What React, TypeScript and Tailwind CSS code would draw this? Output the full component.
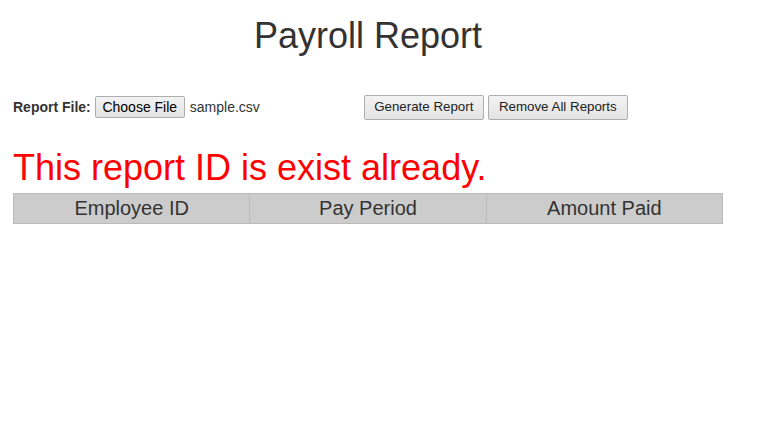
const columns = ["Employee ID", "Pay Period", "Amount Paid"];

const btn =
  "h-[25px] rounded-[2px] border border-[#adadad] bg-gradient-to-b from-[#f3f3f3] to-[#e3e3e3] text-[13.33px] leading-none text-[#222]";

export default function App() {
  return (
    <div className="w-[763px] h-[448px] bg-white font-['Liberation_Sans',Arial,sans-serif] text-[#333]">
      <div className="ml-[13px] w-[710px]">
        <h1 className="pt-[16px] text-center text-[36px] leading-[40px] font-normal">
          Payroll Report
        </h1>

        <div className="mt-[38px] flex h-[26px] items-center">
          <span className="text-[14px] font-bold">Report File:</span>
          <div className="ml-[4px] flex w-[265px] items-center">
            <button className="h-[22px] w-[90px] rounded-[2px] border border-[#adadad] bg-gradient-to-b from-[#f3f3f3] to-[#e3e3e3] text-[14px] leading-none text-black">
              Choose File
            </button>
            <span className="ml-[5px] text-[14px]">sample.csv</span>
          </div>
          <button className={`${btn} ml-[4px] w-[120px]`}>Generate Report</button>
          <button className={`${btn} ml-[4px] w-[140px]`}>Remove All Reports</button>
        </div>

        <p className="mt-[28px] text-[36px] leading-[40px] text-[#ff0000]">
          This report ID is exist already.
        </p>

        <table className="mt-[5px] w-[710px] table-fixed border-collapse">
          <thead>
            <tr>
              {columns.map((c) => (
                <th
                  key={c}
                  className="h-[30px] border border-[#bbbbbb] bg-[#cccccc] p-0 text-center text-[20px] leading-[27px] font-normal text-[#333]"
                >
                  {c}
                </th>
              ))}
            </tr>
          </thead>
        </table>
      </div>
    </div>
  );
}
